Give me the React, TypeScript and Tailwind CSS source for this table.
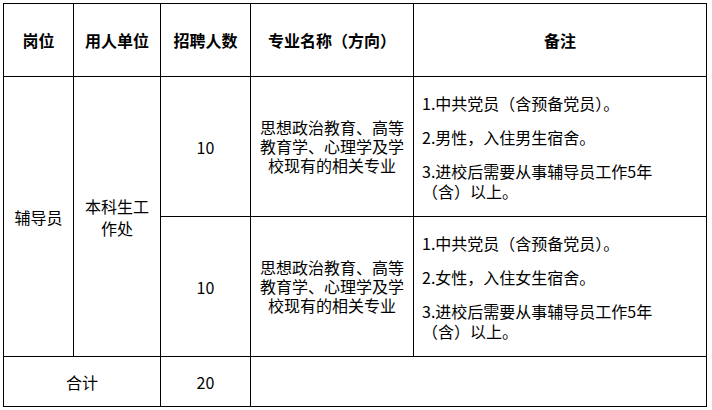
import React from "react";

// 招聘岗位表
const cell = "border border-black align-middle text-center";
const font = { fontFamily: '"Noto Sans CJK SC", "Noto Sans", sans-serif' };

interface PostRow {
  count: number;
  major: string;
  notes: string[];
}

const ROWS: PostRow[] = [
  {
    count: 10,
    major: "思想政治教育、高等教育学、心理学及学校现有的相关专业",
    notes: ["1.中共党员（含预备党员）。", "2.男性，入住男生宿舍。", "3.进校后需要从事辅导员工作5年（含）以上。"],
  },
  {
    count: 10,
    major: "思想政治教育、高等教育学、心理学及学校现有的相关专业",
    notes: ["1.中共党员（含预备党员）。", "2.女性，入住女生宿舍。", "3.进校后需要从事辅导员工作5年（含）以上。"],
  },
];

const Notes = ({ notes }: { notes: string[] }) => (
  <div className="flex flex-col gap-[14px] text-left">
    {notes.map((n, i) => (
      <p key={i} className="w-[240px] leading-[20px]">
        {n}
      </p>
    ))}
  </div>
);

export default function App() {
  return (
    <div className="w-[712px] h-[410px] bg-white pt-[3px] pl-[3px] text-black" style={font}>
      <table className="table-fixed border-collapse w-[703px] text-[16px]">
        <colgroup>
          <col className="w-[70px]" />
          <col className="w-[87px]" />
          <col className="w-[90px]" />
          <col className="w-[163px]" />
          <col className="w-[293px]" />
        </colgroup>
        <thead>
          <tr className="h-[73px] font-bold text-[16px]">
            <th className={cell}>岗位</th>
            <th className={cell}>用人单位</th>
            <th className={cell}>招聘人数</th>
            <th className={cell}>专业名称（方向）</th>
            <th className={cell}>备注</th>
          </tr>
        </thead>
        <tbody>
          {ROWS.map((r, i) => (
            <tr key={i} className="h-[140px]">
              {i === 0 && (
                <>
                  <td rowSpan={2} className={cell}>
                    辅导员
                  </td>
                  <td rowSpan={2} className={`${cell} px-[10px] leading-[22px]`}>
                    本科生工作处
                  </td>
                </>
              )}
              <td className={cell}>{r.count}</td>
              <td className={`${cell} px-[7px] leading-[19px]`}>{r.major}</td>
              <td className={`${cell} pl-[8px] pr-1`}>
                <Notes notes={r.notes} />
              </td>
            </tr>
          ))}
          <tr className="h-[50px]">
            <td colSpan={2} className={cell}>
              合计
            </td>
            <td className={cell}>20</td>
            <td colSpan={2} className={cell}></td>
          </tr>
        </tbody>
      </table>
    </div>
  );
}
